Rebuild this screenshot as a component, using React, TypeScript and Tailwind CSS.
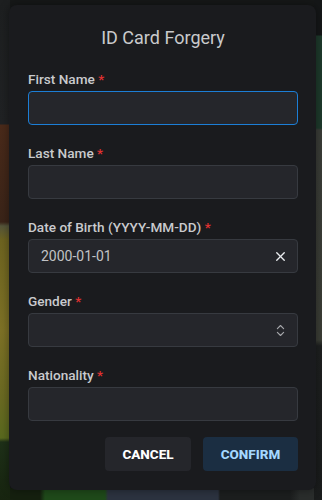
import React from "react";
import { X, ChevronsUpDown } from "lucide-react";

function Label({ text }: { text: string }) {
  return (
    <label className="block text-[13.6px] leading-[20px] font-medium text-[#c9cacd]">
      {text} <span className="text-[#e03131]">*</span>
    </label>
  );
}

function Field({
  label,
  focused,
  value,
  right,
  first,
}: {
  label: string;
  focused?: boolean;
  value?: string;
  right?: React.ReactNode;
  first?: boolean;
}) {
  return (
    <div className={first ? "" : "mt-[18px]"}>
      <Label text={label} />
      <div
        className={
          "mt-[2px] flex h-[34px] items-center rounded-[4px] border bg-[#25262b] pl-[12px] pr-[9px] " +
          (focused ? "border-[#1c7ed6]" : "border-[#373a40]")
        }
      >
        <span className="flex-1 text-[14px] text-[#c1c2c5]">{value}</span>
        {right}
      </div>
    </div>
  );
}

export default function App() {
  return (
    <div
      className="relative h-[500px] w-[322px] overflow-hidden bg-[#1a1c1c]"
      style={{ fontFamily: "Roboto, 'Noto Sans', sans-serif" }}
    >
      <div className="absolute inset-0 flex">
        <div className="w-[10px] bg-[linear-gradient(to_bottom,#1d1f20_0px,#202224_124px,#4a2a1a_125px,#3a2418_222px,#55553a_226px,#6e6420_240px,#7e7226_330px,#6a6a22_400px,#5a6a1e_438px,#1e3018_442px,#17240f_500px)]" />
        <div className="flex flex-1 flex-col">
          <div className="flex-1 bg-[#161818]" />
          <div className="h-[12px] bg-[linear-gradient(to_right,#15200f_0px,#15200f_30px,#1f4a1a_35px,#1f4a1a_95px,#2c3340_98px,#2c3340_208px,#1c1e1e_210px,#1c1e1e_280px,#2a2d2c_290px)]" />
        </div>
        <div className="w-[8px] bg-[linear-gradient(to_bottom,#151718_0px,#151718_35px,#1e3a2c_36px,#1e3a2c_128px,#3a3d38_130px,#3b3e36_340px,#1e2020_346px,#1a1c1c_500px)]" />
      </div>

      <div className="relative ml-[9px] mt-[5px] flex h-[485px] w-[307px] flex-col rounded-[8px] bg-[#1a1b1e] pl-[19px] pr-[18px] pt-[19px] shadow-[0_0_10px_rgba(0,0,0,0.4)]">
        <h2 className="text-center text-[18px] leading-[28px] text-[#c9cacc]">
          ID Card Forgery
        </h2>
        <div className="mt-[17px]">
          <Field label="First Name" focused first />
          <Field label="Last Name" />
          <Field
            label="Date of Birth (YYYY-MM-DD)"
            value="2000-01-01"
            right={<X size={15} strokeWidth={2.2} className="text-[#e9ecef]" />}
          />
          <Field
            label="Gender"
            right={<ChevronsUpDown size={15} strokeWidth={1.8} className="text-[#a6a7ab]" />}
          />
          <Field label="Nationality" />
        </div>
        <div className="mt-[16px] flex justify-end gap-[12px]">
          <button className="flex h-[34px] w-[86px] items-center justify-center rounded-[4px] bg-[#25262b] text-[13.5px] font-extrabold text-white">
            CANCEL
          </button>
          <button className="flex h-[34px] w-[95px] items-center justify-center rounded-[4px] bg-[#1b2e42] text-[13.5px] font-extrabold text-[#a5d8ff]">
            CONFIRM
          </button>
        </div>
      </div>
    </div>
  );
}
